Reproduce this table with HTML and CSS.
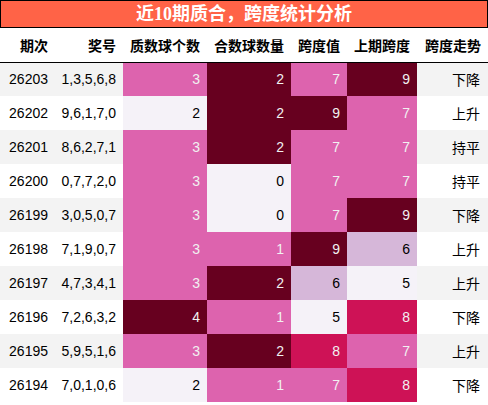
FILE: index.html
```html
<!DOCTYPE html>
<html lang="zh">
<head>
<meta charset="utf-8">
<link rel="stylesheet" href="styles.css">
</head>
<body>
<div class="title">近10期质合，跨度统计分析</div>
<table class="stats">
  <colgroup>
    <col class="c1"><col class="c2"><col class="c3"><col class="c4"><col class="c5"><col class="c6"><col class="c7">
  </colgroup>
  <thead>
    <tr><th>期次</th><th>奖号</th><th>质数球个数</th><th>合数球数量</th><th>跨度值</th><th>上期跨度</th><th>跨度走势</th></tr>
  </thead>
  <tbody>
    <tr><td>26203</td><td>1,3,5,6,8</td><td class="g2">3</td><td class="g4">2</td><td class="g2">7</td><td class="g4">9</td><td class="cn">下降</td></tr>
    <tr><td>26202</td><td>9,6,1,7,0</td><td class="g0">2</td><td class="g4">2</td><td class="g4">9</td><td class="g2">7</td><td class="cn">上升</td></tr>
    <tr><td>26201</td><td>8,6,2,7,1</td><td class="g2">3</td><td class="g4">2</td><td class="g2">7</td><td class="g2">7</td><td class="cn">持平</td></tr>
    <tr><td>26200</td><td>0,7,7,2,0</td><td class="g2">3</td><td class="g0">0</td><td class="g2">7</td><td class="g2">7</td><td class="cn">持平</td></tr>
    <tr><td>26199</td><td>3,0,5,0,7</td><td class="g2">3</td><td class="g0">0</td><td class="g2">7</td><td class="g4">9</td><td class="cn">下降</td></tr>
    <tr><td>26198</td><td>7,1,9,0,7</td><td class="g2">3</td><td class="g2">1</td><td class="g4">9</td><td class="g1">6</td><td class="cn">上升</td></tr>
    <tr><td>26197</td><td>4,7,3,4,1</td><td class="g2">3</td><td class="g4">2</td><td class="g1">6</td><td class="g0">5</td><td class="cn">上升</td></tr>
    <tr><td>26196</td><td>7,2,6,3,2</td><td class="g4">4</td><td class="g2">1</td><td class="g0">5</td><td class="g3">8</td><td class="cn">下降</td></tr>
    <tr><td>26195</td><td>5,9,5,1,6</td><td class="g2">3</td><td class="g4">2</td><td class="g3">8</td><td class="g2">7</td><td class="cn">上升</td></tr>
    <tr><td>26194</td><td>7,0,1,0,6</td><td class="g0">2</td><td class="g2">1</td><td class="g2">7</td><td class="g3">8</td><td class="cn">下降</td></tr>
  </tbody>
</table>
</body>
</html>
```
FILE: styles.css
```css
html, body {
  margin: 0;
  padding: 0;
  background: #ffffff;
}

.title {
  box-sizing: border-box;
  width: 488px;
  height: 28px;
  border: 1px solid #000000;
  background: #ff6347;
  color: #ffffff;
  font-family: "Liberation Serif", "Noto Sans CJK SC", serif;
  font-weight: bold;
  font-size: 18px;
  line-height: 27px;
  text-align: center;
}

.stats {
  width: 488px;
  table-layout: fixed;
  border-collapse: collapse;
  border-spacing: 0;
  font-family: "Liberation Sans", "Noto Sans CJK SC", sans-serif;
  font-size: 14px;
  color: #000000;
}

.c1 { width: 55px; }
.c2 { width: 68px; }
.c3 { width: 84px; }
.c4 { width: 84px; }
.c5 { width: 56px; }
.c6 { width: 70px; }
.c7 { width: 71px; }

.stats th,
.stats td {
  height: 34px;
  padding: 0 7px 0 0;
  text-align: right;
  vertical-align: middle;
  white-space: nowrap;
  box-sizing: border-box;
}

.stats th {
  font-weight: bold;
  background: #ffffff;
  border-bottom: 1px solid #000000;
}

.stats tbody tr:nth-child(odd) { background: #f3f3f3; }
.stats tbody tr:nth-child(even) { background: #ffffff; }

.stats td.cn { padding-right: 8px; }

.g0 { background: #f5f2f8; color: #000000; }
.g1 { background: #d6b7d9; color: #000000; }
.g2 { background: #dd63ae; color: #f1f1f1; }
.g3 { background: #ce1256; color: #f1f1f1; }
.g4 { background: #67001f; color: #f1f1f1; }
```
